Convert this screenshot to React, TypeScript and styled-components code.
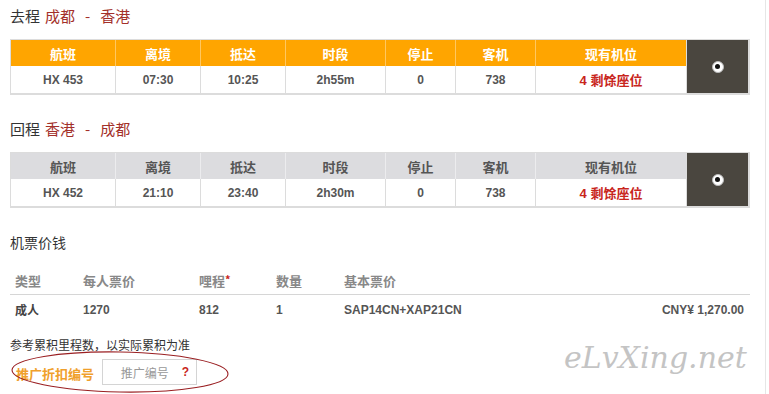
import React from 'react';
import styled, {createGlobalStyle} from "styled-components";

type Flight = {
	no: string
	dep: string
	arr: string
	dur: string
	stops: string
	plane: string
	seats: string
}

const GlobalStyle = createGlobalStyle`
  body {
    margin: 0;
    background: #fff;
    font-family: 'Liberation Sans', 'Noto Sans CJK SC', sans-serif;
  }
`

const cols = ['航班', '离境', '抵达', '时段', '停止', '客机', '现有机位']

const FlightBlock = (props: {dir: string, from: string, to: string, flight: Flight, grey?: boolean}) => {
	const f = props.flight
	return (
		<Block>
			<Title>
				{props.dir}
				<Route>{props.from}<Dash>-</Dash>{props.to}</Route>
			</Title>
			<FlightGrid>
				{cols.map((c) => <HeadCell key={c} $grey={props.grey}>{c}</HeadCell>)}
				<RadioCell>
					<Radio />
				</RadioCell>
				<Cell>{f.no}</Cell>
				<Cell>{f.dep}</Cell>
				<Cell>{f.arr}</Cell>
				<Cell>{f.dur}</Cell>
				<Cell>{f.stops}</Cell>
				<Cell>{f.plane}</Cell>
				<Cell $red>{f.seats}</Cell>
			</FlightGrid>
		</Block>
	)
}

export default function App() {
	return (
		<Page>
			<GlobalStyle />
			<FlightBlock dir="去程" from="成都" to="香港"
				flight={{no: 'HX 453', dep: '07:30', arr: '10:25', dur: '2h55m', stops: '0', plane: '738', seats: '4 剩馀座位'}} />
			<FlightBlock dir="回程" from="香港" to="成都" grey
				flight={{no: 'HX 452', dep: '21:10', arr: '23:40', dur: '2h30m', stops: '0', plane: '738', seats: '4 剩馀座位'}} />

			<PriceTitle>机票价钱</PriceTitle>
			<PriceGrid>
				<PriceHead>类型</PriceHead>
				<PriceHead>每人票价</PriceHead>
				<PriceHead>哩程<Star>*</Star></PriceHead>
				<PriceHead>数量</PriceHead>
				<PriceHead>基本票价</PriceHead>
				<PriceHead />
				<PriceCell $dark>成人</PriceCell>
				<PriceCell>1270</PriceCell>
				<PriceCell>812</PriceCell>
				<PriceCell>1</PriceCell>
				<PriceCell>SAP14CN+XAP21CN</PriceCell>
				<PriceCell $right>CNY¥ 1,270.00</PriceCell>
			</PriceGrid>

			<Note>参考累积里程数，以实际累积为准</Note>
			<PromoRow>
				<PromoLabel>推广折扣编号</PromoLabel>
				<PromoInput>
					<span>推广编号</span>
					<Help>?</Help>
				</PromoInput>
			</PromoRow>

			<Circle width="222" height="46" viewBox="0 0 222 46">
				<ellipse cx="110" cy="22" rx="108" ry="20" fill="none" stroke="#9a1f22" strokeWidth="1.1" transform="rotate(1 110 22)" />
			</Circle>
			<Watermark>eLvXing.net</Watermark>
		</Page>
	)
}

const Page = styled.div`
  position: relative;
  width: 766px;
  height: 394px;
  box-sizing: border-box;
  padding: 6px 0 0 10px;
  border-right: 1px solid #e6e6e6;
  overflow: hidden;
`

const Block = styled.div`
  margin-bottom: 24px;
`

const Title = styled.div`
  font-family: 'Noto Sans CJK SC', sans-serif;
  font-size: 15px;
  line-height: 20px;
  color: #333;
  margin-bottom: 13px;
`

const Route = styled.span`
  color: #a3302a;
  margin-left: 5px;
`

const Dash = styled.span`
  margin: 0 10px;
`

const FlightGrid = styled.div`
  display: grid;
  grid-template-columns: 104px 85px 85px 100px 70px 80px 151px 62px;
  grid-template-rows: 26px 27px;
  width: 737px;
  border: 1px solid #dcdcdc;
  border-right-width: 2px;
  border-bottom-width: 2px;
`

const HeadCell = styled.div<{$grey?: boolean}>`
  display: flex;
  align-items: center;
  justify-content: center;
  background: ${p => p.$grey ? '#dcdcdf' : '#ffa500'};
  color: ${p => p.$grey ? '#555' : '#fff'};
  font-family: 'Noto Sans CJK SC', sans-serif;
  font-size: 13px;
  font-weight: 700;
  border-left: 1px solid ${p => p.$grey ? '#ececee' : '#ffc760'};
  &:first-child {
    border-left: none;
  }
`

const Cell = styled.div<{$red?: boolean}>`
  display: flex;
  align-items: center;
  justify-content: center;
  background: #fff;
  color: ${p => p.$red ? '#c8251c' : '#555'};
  font-size: ${p => p.$red ? '13px' : '12px'};
  font-weight: 700;
  border-left: 1px solid #dcdcdc;
  &:nth-child(9) {
    border-left: none;
  }
`

const RadioCell = styled.div`
  grid-column: 8;
  grid-row: 1 / span 2;
  background: #4a463f;
  border-left: 1px solid #dcdcdc;
  display: flex;
  align-items: center;
  justify-content: center;
`

const Radio = styled.span`
  width: 10px;
  height: 10px;
  border-radius: 50%;
  background: #fff;
  border: 1px solid #bbb;
  display: flex;
  align-items: center;
  justify-content: center;
  &::after {
    content: '';
    width: 5px;
    height: 5px;
    border-radius: 50%;
    background: #111;
  }
`

const PriceTitle = styled.div`
  font-family: 'Noto Sans CJK SC', sans-serif;
  font-size: 14px;
  line-height: 20px;
  color: #333;
  margin-top: 6px;
  margin-bottom: 14px;
`

const PriceGrid = styled.div`
  display: grid;
  grid-template-columns: 68px 116px 77px 68px 1fr auto;
  grid-template-rows: 29px 29px;
  width: 740px;
`

const PriceHead = styled.div`
  padding-left: 5px;
  display: flex;
  align-items: center;
  color: #888;
  font-family: 'Noto Sans CJK SC', sans-serif;
  font-size: 13px;
  font-weight: 700;
  border-bottom: 1px solid #d6d6d6;
`

const Star = styled.span`
  color: #c8251c;
  font-size: 11px;
  align-self: flex-start;
  margin-top: 5px;
`

const PriceCell = styled.div<{$dark?: boolean, $right?: boolean}>`
  padding-left: 5px;
  padding-right: ${p => p.$right ? '6px' : '0'};
  display: flex;
  align-items: center;
  justify-content: ${p => p.$right ? 'flex-end' : 'flex-start'};
  color: ${p => p.$dark ? '#444' : '#555'};
  font-size: 12px;
  font-weight: 700;
`

const Note = styled.div`
  font-family: 'Noto Sans CJK SC', sans-serif;
  font-size: 12px;
  line-height: 18px;
  color: #333;
  margin-top: 12px;
`

const PromoRow = styled.div`
  display: flex;
  align-items: center;
  margin-top: 5px;
  padding-left: 6px;
  gap: 8px;
`

const PromoLabel = styled.span`
  font-family: 'Noto Sans CJK SC', sans-serif;
  font-size: 13px;
  font-weight: 700;
  color: #f0a02c;
  margin-top: 3px;
`

const PromoInput = styled.div`
  width: 95px;
  height: 26px;
  border: 1px solid #d4d4d4;
  display: flex;
  align-items: center;
  justify-content: flex-end;
  gap: 13px;
  padding-right: 7px;
  box-sizing: border-box;
  font-family: 'Noto Sans CJK SC', sans-serif;
  font-size: 12px;
  color: #999;
`

const Help = styled.span`
  color: #c8251c;
  font-family: 'Liberation Sans', sans-serif;
  font-weight: 700;
  font-size: 12px;
`

const Circle = styled.svg`
  position: absolute;
  left: 10px;
  top: 350px;
`

const Watermark = styled.div`
  position: absolute;
  left: 564px;
  top: 340px;
  font-family: 'DejaVu Serif', serif;
  font-style: italic;
  font-size: 30px;
  color: #c4c4c4;
`
